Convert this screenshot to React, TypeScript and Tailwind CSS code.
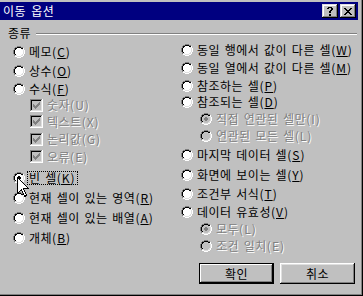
import React from "react";

type ColorMap = Record<string, string>;

function Pix({ map, colors, w, h }: { map: string[]; colors: ColorMap; w: number; h: number }) {
  const rects: React.ReactElement[] = [];
  map.forEach((row, y) => {
    let x = 0;
    while (x < row.length) {
      const ch = row[x];
      if (colors[ch]) {
        let e = x;
        while (e + 1 < row.length && row[e + 1] === ch) e++;
        rects.push(<rect key={`${x}-${y}`} x={x} y={y} width={e - x + 1} height={1} fill={colors[ch]} />);
        x = e + 1;
      } else x++;
    }
  });
  return (
    <svg width={w} height={h} viewBox={`0 0 ${w} ${h}`} shapeRendering="crispEdges" className="shrink-0 block">
      {rects}
    </svg>
  );
}

const RADIO = [
  "....DDDD....",
  "..DDKKKKDD..",
  ".DKKFFFFKKW.",
  ".DKFFFFFFLW.",
  "DKFFFFFFFFLW",
  "DKFFFFFFFFLW",
  "DKFFFFFFFFLW",
  "DKFFFFFFFFLW",
  ".DKFFFFFFLW.",
  ".DLLFFFFLLW.",
  "..WWLLLLWW..",
  "....WWWW....",
];
const RADIO_DOT = [
  "",
  "",
  "",
  "",
  ".....XX.....",
  "....XXXX....",
  "....XXXX....",
  ".....XX.....",
];

function Radio({ checked = false, disabled = false }: { checked?: boolean; disabled?: boolean }) {
  const map = RADIO.map((r, y) => {
    const d = RADIO_DOT[y];
    if (!checked || !d) return r;
    return r
      .split("")
      .map((c, x) => (d[x] === "X" ? "X" : c))
      .join("");
  });
  return (
    <Pix
      map={map}
      w={12}
      h={12}
      colors={{
        D: "#808080",
        K: "#000000",
        L: "#dfdfdf",
        W: "#ffffff",
        F: disabled ? "#c0c0c0" : "#ffffff",
        X: disabled ? "#808080" : "#000000",
      }}
    />
  );
}

const CHECK = [
  "DDDDDDDDDDDDW",
  "DKKKKKKKKKKLW",
  "DKFFFFFFFFFLW",
  "DKFFFFFFFXFLW",
  "DKFFFFFFXXFLW",
  "DKFXFFFXXXFLW",
  "DKFXXFXXXFFLW",
  "DKFXXXXXFFFLW",
  "DKFFXXXFFFFLW",
  "DKFFFXFFFFFLW",
  "DKFFFFFFFFFLW",
  "DLLLLLLLLLLLW",
  "WWWWWWWWWWWWW",
];

function Check({ disabled = true }: { disabled?: boolean }) {
  return (
    <Pix
      map={CHECK}
      w={13}
      h={13}
      colors={{
        D: "#808080",
        K: "#000000",
        L: "#dfdfdf",
        W: "#ffffff",
        F: disabled ? "#c0c0c0" : "#ffffff",
        X: disabled ? "#808080" : "#000000",
      }}
    />
  );
}

const CLOSE_X = [
  "XX....XX",
  ".XX..XX.",
  "..XXXX..",
  "...XX...",
  "..XXXX..",
  ".XX..XX.",
  "XX....XX",
];
const HELP_Q = [
  ".XXXX.",
  "XX..XX",
  "....XX",
  "...XX.",
  "..XX..",
  "..XX..",
  "......",
  "..XX..",
  "..XX..",
];

function CapButton({ children }: { children: React.ReactNode }) {
  return (
    <div className="w-[16px] h-[14px] bg-[#c0c0c0] flex items-center justify-center shadow-[inset_-1px_-1px_0_#000,inset_1px_1px_0_#dfdfdf,inset_-2px_-2px_0_#808080,inset_2px_2px_0_#fff]">
      {children}
    </div>
  );
}

function Text({
  pre,
  k,
  disabled = false,
}: {
  pre: string;
  k: string;
  disabled?: boolean;
}) {
  return (
    <span
      className={
        "whitespace-pre leading-[12px] tracking-[0.5px] [word-spacing:1.5px] " +
        (disabled ? "text-[#808080] [text-shadow:1px_1px_0_#fff]" : "text-black")
      }
    >
      {pre}
      <span className="tracking-[1px]">
        (<span className={disabled ? "" : "underline underline-offset-[1px]"}>{k}</span>)
      </span>
    </span>
  );
}

function RadioRow({
  h,
  pre,
  k,
  checked,
  disabled,
  indent = "",
}: {
  h: string;
  pre: string;
  k: string;
  checked?: boolean;
  disabled?: boolean;
  indent?: string;
}) {
  return (
    <div className={"flex items-center gap-[4px] " + h + " " + indent}>
      <Radio checked={checked} disabled={disabled} />
      <Text pre={pre} k={k} disabled={disabled} />
    </div>
  );
}

function CheckRow({ h, pre, k }: { h: string; pre: string; k: string }) {
  return (
    <div className={"flex items-center gap-[4px] ml-[17px] " + h}>
      <Check />
      <Text pre={pre} k={k} disabled />
    </div>
  );
}

function Button({ label, def = false }: { label: string; def?: boolean }) {
  return (
    <div
      className={
        "w-[75px] h-[21px] bg-[#c0c0c0] flex items-center justify-center text-black leading-[12px] tracking-[0.5px] " +
        (def
          ? "shadow-[inset_0_0_0_1px_#000,inset_-2px_-2px_0_#000,inset_2px_2px_0_#fff,inset_-3px_-3px_0_#808080]"
          : "shadow-[inset_-1px_-1px_0_#000,inset_1px_1px_0_#fff,inset_-2px_-2px_0_#808080,inset_2px_2px_0_#dfdfdf]")
      }
    >
      {label}
    </div>
  );
}

export default function App() {
  return (
    <div className="w-[363px] h-[296px] bg-[#c0c0c0] relative overflow-hidden font-['Noto_Sans_CJK_KR','Noto_Sans',sans-serif] text-[12px] text-black shadow-[inset_-1px_-1px_0_#000,inset_-2px_-2px_0_#808080]">
      <div className="pt-[2px]">
        {/* Title bar */}
        <div className="mr-[5px] h-[18px] bg-[#000080] flex items-center justify-between pl-[3px] pr-[2px]">
          <span className="text-white leading-[12px] [word-spacing:2px] tracking-[0.5px]">이동 옵션</span>
          <div className="flex gap-[2px]">
            <CapButton>
              <Pix map={HELP_Q} w={6} h={9} colors={{ X: "#000" }} />
            </CapButton>
            <CapButton>
              <Pix map={CLOSE_X} w={8} h={7} colors={{ X: "#000" }} />
            </CapButton>
          </div>
        </div>

        {/* Group header */}
        <div className="mt-[6px] h-[14px] flex items-center pl-[8px] pr-[6px]">
          <span className="leading-[12px] tracking-[0.5px]">종류</span>
          <div className="flex-1 ml-[5px] h-[2px] border-t border-[#808080] border-b border-b-white mt-[2px]" />
        </div>

        {/* Body */}
        <div className="mt-[1px] flex">
          <div className="w-[181px] pl-[13px] flex flex-col">
            <RadioRow h="h-[19px] mt-[1px]" pre="메모" k="C" />
            <RadioRow h="h-[19px]" pre="상수" k="O" />
            <RadioRow h="h-[17px]" pre="수식" k="F" />
            <CheckRow h="h-[16px]" pre="숫자" k="U" />
            <CheckRow h="h-[17px]" pre="텍스트" k="X" />
            <CheckRow h="h-[18px]" pre="논리값" k="G" />
            <CheckRow h="h-[17px]" pre="오류" k="E" />
            <div className="flex items-center gap-[2px] h-[20px] mt-[3px]">
              <Radio checked />
              <span className="border border-dotted border-black px-[1px] h-[14px] flex items-center">
                <Text pre="빈 셀" k="K" />
              </span>
            </div>
            <RadioRow h="h-[20px]" pre="현재 셀이 있는 영역" k="R" />
            <RadioRow h="h-[20px]" pre="현재 셀이 있는 배열" k="A" />
            <RadioRow h="h-[20px]" pre="개체" k="B" />
          </div>
          <div className="flex-1 flex flex-col">
            <RadioRow h="h-[18px]" pre="동일 행에서 값이 다른 셀" k="W" />
            <RadioRow h="h-[18px]" pre="동일 열에서 값이 다른 셀" k="M" />
            <RadioRow h="h-[17px]" pre="참조하는 셀" k="P" />
            <RadioRow h="h-[16px]" pre="참조되는 셀" k="D" />
            <RadioRow h="h-[17px]" pre="직접 연관된 셀만" k="I" checked disabled indent="ml-[19px]" />
            <RadioRow h="h-[17px]" pre="연관된 모든 셀" k="L" disabled indent="ml-[19px]" />
            <RadioRow h="h-[21px]" pre="마지막 데이터 셀" k="S" />
            <RadioRow h="h-[19px]" pre="화면에 보이는 셀" k="Y" />
            <RadioRow h="h-[19px]" pre="조건부 서식" k="T" />
            <RadioRow h="h-[17px]" pre="데이터 유효성" k="V" />
            <RadioRow h="h-[18px]" pre="모두" k="L" checked disabled indent="ml-[19px]" />
            <RadioRow h="h-[15px]" pre="조건 일치" k="E" disabled indent="ml-[19px]" />
            <div className="mt-[10px] ml-[18px] flex gap-[6px]">
              <Button label="확인" def />
              <Button label="취소" />
            </div>
          </div>
        </div>
      </div>

      {/* Mouse cursor */}
      <svg
        width="13"
        height="21"
        viewBox="0 0 13 21"
        className="absolute left-[17px] top-[177px]"
        shapeRendering="crispEdges"
      >
        <path
          d="M0.5 0.5 V16.5 L4.5 12.5 L7.5 19.5 L9.5 18.5 L6.5 11.5 H11.5 Z"
          fill="#fff"
          stroke="#000"
          strokeWidth="1"
          strokeLinejoin="miter"
        />
      </svg>
    </div>
  );
}
